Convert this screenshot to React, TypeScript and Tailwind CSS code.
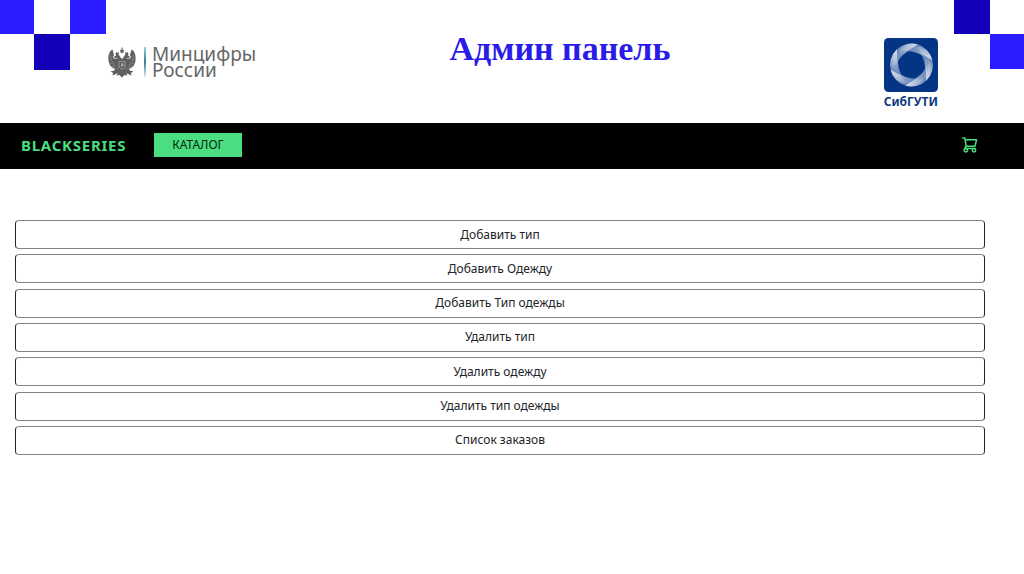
const ACTIONS = [
  'Добавить тип',
  'Добавить Одежду',
  'Добавить Тип одежды',
  'Удалить тип',
  'Удалить одежду',
  'Удалить тип одежды',
  'Список заказов',
]

const PETAL_ANGLES = [0, 60, 120, 180, 240, 300]

function Eagle() {
  return (
    <svg viewBox="0 0 56 62" className="h-[31px] w-7 shrink-0" fill="#5f5f61" aria-hidden="true">
      {/* crowns */}
      <path d="M24 7l2-2 1 1V1h2v5l1-1 2 2-2 5h-4z" />
      <path d="M15 13l2-3 2 2 2-2 1 4-2 3h-4z" />
      <path d="M41 13l-2-3-2 2-2-2-1 4 2 3h4z" />
      {/* heads */}
      <path d="M12 20l5-4h5l4 6v8h-5v-7l-4-1-3 1z" />
      <path d="M44 20l-5-4h-5l-4 6v8h5v-7l4-1 3 1z" />
      {/* wings */}
      <path d="M9 5C2 9 0 17 1 27c1 9 6 15 16 18l6-14-3-8-6 1-4-3 2-5z" />
      <path d="M47 5c7 4 9 12 8 22-1 9-6 15-16 18l-6-14 3-8 6 1 4-3-2-5z" />
      <g stroke="#fff" strokeWidth="0.9" fill="none" opacity="0.45">
        <path d="M4 15l4 11M2 23l9 8M4 32l10 3M8 39l9-1M52 15l-4 11M54 23l-9 8M52 32l-10 3M48 39l-9-1" />
      </g>
      {/* body, legs and tail */}
      <path d="M17 23h22l1 15-6 10-6 3-6-3-6-10z" />
      <path d="M17 41l-6 7-6 0 5 4-1 5 7-3 8-5zM39 41l6 7 6 0-5 4 1 5-7-3-8-5z" />
      <path d="M22 46h12l5 11-6-1-5 5-5-5-6 1z" />
      <path d="M22 29h12v9c0 4-3 5-6 7-3-2-6-3-6-7z" stroke="#fff" strokeWidth="0.7" />
      <path d="M27 32l3 1 1 4-3 3-2-2z" fill="#aaa" />
    </svg>
  )
}

function MinistryLogo() {
  return (
    <div className="mt-[46px] ml-0.5 flex h-8 items-center">
      <Eagle />
      <span className="ml-2 h-[30px] w-0.5 bg-linear-to-b from-[#8fd4e0] via-[#2d7d9a] to-[#e3e9f0]" />
      <p className="ml-1.5 font-['Noto_Sans',sans-serif] text-[19px] leading-4 text-[#666668]">
        Минцифры
        <br />
        России
      </p>
    </div>
  )
}

function UniversityLogo() {
  return (
    <div className="mt-[38px] flex flex-col items-center">
      <svg viewBox="0 0 108 108" className="size-[54px]" aria-hidden="true">
        <defs>
          <linearGradient id="petal" x1="0" y1="0" x2="1" y2="0">
            <stop offset="0" stopColor="#fff" stopOpacity="0.02" />
            <stop offset="0.5" stopColor="#fff" stopOpacity="0.35" />
            <stop offset="1" stopColor="#fff" stopOpacity="0.75" />
          </linearGradient>
        </defs>
        <rect width="108" height="108" rx="9" fill="#043585" />
        {PETAL_ANGLES.map(angle => (
          <path
            key={angle}
            d="M-38-20A43 43 0 0 1 38-20Q0-32-38-20Z"
            fill="url(#petal)"
            transform={`translate(55 54) rotate(${angle + 15})`}
          />
        ))}
        <circle cx="55" cy="54" r="33" fill="none" stroke="#dce7f7" strokeWidth="11" strokeOpacity="0.25" />
      </svg>
      <span className="font-['Noto_Sans',sans-serif] text-[12px] leading-5 font-bold text-[#0f3a80]">СибГУТИ</span>
    </div>
  )
}

function CartIcon() {
  return (
    <svg viewBox="0 0 16 16" className="size-4" fill="none" stroke="#4ade80" strokeWidth="1.5" aria-hidden="true">
      <path d="M.8 1h2l1.4 8.2h8.8l1.5-6.4H3.2" strokeLinejoin="round" strokeLinecap="round" />
      <path d="M4.2 9.2l-1.4 2.3h10.4" strokeLinejoin="round" strokeLinecap="round" />
      <circle cx="3.8" cy="13.3" r="1.7" />
      <circle cx="12" cy="13.3" r="1.7" />
    </svg>
  )
}

function SlideHeader() {
  return (
    <header className="flex h-[123px] items-start">
      <div className="grid shrink-0 grid-cols-[34px_36px_36px] grid-rows-[34px_36px]">
        <span className="bg-[#2b1bff]" />
        <span />
        <span className="bg-[#2b1bff]" />
        <span />
        <span className="bg-[#1200b8]" />
      </div>
      <MinistryLogo />
      <h1 className="mt-7 mr-5 flex-1 text-center font-['Liberation_Serif',serif] text-[34px] leading-[42px] font-bold text-[#2b1be8]">
        Админ панель
      </h1>
      <UniversityLogo />
      <div className="ml-4 grid shrink-0 grid-cols-[36px_34px] grid-rows-[34px_35px]">
        <span className="bg-[#1200b8]" />
        <span />
        <span />
        <span className="bg-[#2b1bff]" />
      </div>
    </header>
  )
}

export default function App() {
  return (
    <div className="min-h-screen bg-white font-['Noto_Sans',sans-serif]">
      <SlideHeader />
      <nav className="flex h-[46px] items-center bg-black pr-[46px] pb-[3px] pl-[21px]">
        <a href="#" className="text-[15px] leading-6 font-bold tracking-wider text-[#4ade80]">BLACKSERIES</a>
        <a href="#catalog" className="ml-7 bg-[#4ade80] px-[18px] text-[12px] leading-6 text-[#06280f]">
          КАТАЛОГ
        </a>
        <button type="button" aria-label="Корзина" className="ml-auto">
          <CartIcon />
        </button>
      </nav>
      <main className="mt-[51px] mr-[39px] ml-[15px] flex h-[235px] flex-col justify-between">
        {ACTIONS.map(label => (
          <button
            key={label}
            type="button"
            className="h-[29px] rounded border border-x-[#212529] border-y-[#808386] text-[12px] leading-4 text-[#212529]"
          >
            {label}
          </button>
        ))}
      </main>
    </div>
  )
}
